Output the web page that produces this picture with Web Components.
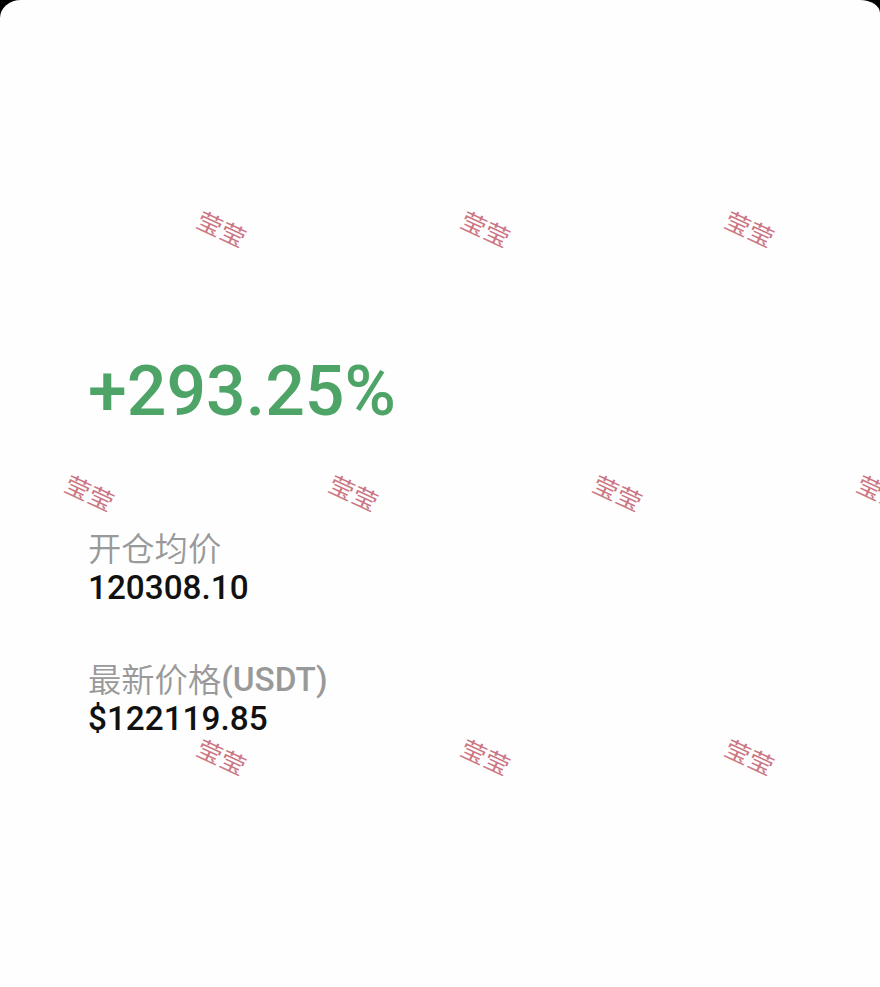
<!DOCTYPE html>
<html lang="zh-CN">
<head>
  <meta charset="utf-8">
  <title>持仓分享</title>
  <style>
    body {
      margin: 0;
      background: #000;
      overflow: hidden;
    }
  </style>
</head>
<body>
  <share-card>
    <profit-rate>+293.25%</profit-rate>
    <price-field label="开仓均价">120308.10</price-field>
    <price-field label="最新价格(USDT)">$122119.85</price-field>
    <water-mark slot="overlay" text="莹莹"></water-mark>
  </share-card>

  <script>
    const cardTemplate = document.createElement('template')

    cardTemplate.innerHTML = `
      <main>
        <slot></slot>
      </main>
      <slot name='overlay'></slot>
      <style>
        :host {
          display: block;
          position: relative;
          box-sizing: border-box;
          width: 880px;
          height: 987px;
          overflow: hidden;
          border-radius: 21px 20px 0 0 / 18px 13px 0 0;
          background-color: #fefefe;
          font-family: Roboto, 'Noto Sans CJK SC', sans-serif;
        }
        main {
          display: flex;
          flex-direction: column;
          align-items: flex-start;
          padding: 346px 88px 0;
        }
      </style>
    `

    customElements.define('share-card',
      /**
       * Represents a share-card element.
       */
      class extends HTMLElement {
        /**
         * Creates an instance of current type.
         */
        constructor () {
          super()
          this.attachShadow({ mode: 'open' })
            .appendChild(cardTemplate.content.cloneNode(true))
        }
      }
    )

    const rateTemplate = document.createElement('template')

    rateTemplate.innerHTML = `
      <slot></slot>
      <style>
        :host {
          display: block;
          height: 90px;
          margin-bottom: 93px;
          color: #4da466;
          font-size: 69.8px;
          font-weight: 500;
          line-height: 90px;
          white-space: nowrap;
        }
      </style>
    `

    customElements.define('profit-rate',
      /**
       * Represents a profit-rate element.
       */
      class extends HTMLElement {
        /**
         * Creates an instance of current type.
         */
        constructor () {
          super()
          this.attachShadow({ mode: 'open' })
            .appendChild(rateTemplate.content.cloneNode(true))
        }
      }
    )

    const fieldTemplate = document.createElement('template')

    fieldTemplate.innerHTML = `
      <div id='label'></div>
      <div id='value'><slot></slot></div>
      <style>
        :host {
          display: flex;
          flex-direction: column;
          margin-bottom: 53px;
          font-size: 33.3px;
          font-weight: 500;
          white-space: nowrap;
        }
        #label {
          display: flex;
          height: 39px;
          line-height: 39px;
          color: #999;
        }
        #label .cjk {
          padding-top: 1px;
          font-weight: 350;
        }
        #value {
          height: 39px;
          line-height: 39px;
          color: #111;
        }
      </style>
    `

    customElements.define('price-field',
      /**
       * Represents a price-field element.
       */
      class extends HTMLElement {
        /**
         * Creates an instance of current type.
         */
        constructor () {
          super()
          this.attachShadow({ mode: 'open' })
            .appendChild(fieldTemplate.content.cloneNode(true))
        }

        /**
         * Called after the element is inserted in the DOM.
         */
        connectedCallback () {
          // The Chinese part of the label is set lighter than the unit.
          const [, name, unit] = this.getAttribute('label').match(/^([^(]*)(.*)$/)
          const cjk = document.createElement('span')
          cjk.className = 'cjk'
          cjk.textContent = name
          this.shadowRoot.querySelector('#label').replaceChildren(cjk, unit)
        }
      }
    )

    const markTemplate = document.createElement('template')

    markTemplate.innerHTML = `
      <style>
        :host {
          position: absolute;
          inset: 0;
          overflow: hidden;
          pointer-events: none;
        }
        span {
          position: absolute;
          width: 80px;
          height: 40px;
          margin: -20px 0 0 -40px;
          color: #cb7683;
          font: 400 25.5px/40px 'Noto Sans CJK SC', sans-serif;
          text-align: center;
          transform: rotate(25deg) scaleY(0.92);
        }
      </style>
    `

    customElements.define('water-mark',
      /**
       * Represents a water-mark element.
       */
      class extends HTMLElement {
        /**
         * Creates an instance of current type.
         */
        constructor () {
          super()
          this.attachShadow({ mode: 'open' })
            .appendChild(markTemplate.content.cloneNode(true))
        }

        /**
         * Called after the element is inserted in the DOM.
         */
        connectedCallback () {
          const step = 264
          for (let row = 0; row < 3; row++) {
            const start = row % 2 ? 90 : 222
            for (let x = start; x < 900; x += step) {
              const mark = document.createElement('span')
              mark.textContent = this.getAttribute('text')
              mark.style.left = `${x}px`
              mark.style.top = `${228 + row * step}px`
              this.shadowRoot.append(mark)
            }
          }
        }
      }
    )
  </script>
</body>
</html>
